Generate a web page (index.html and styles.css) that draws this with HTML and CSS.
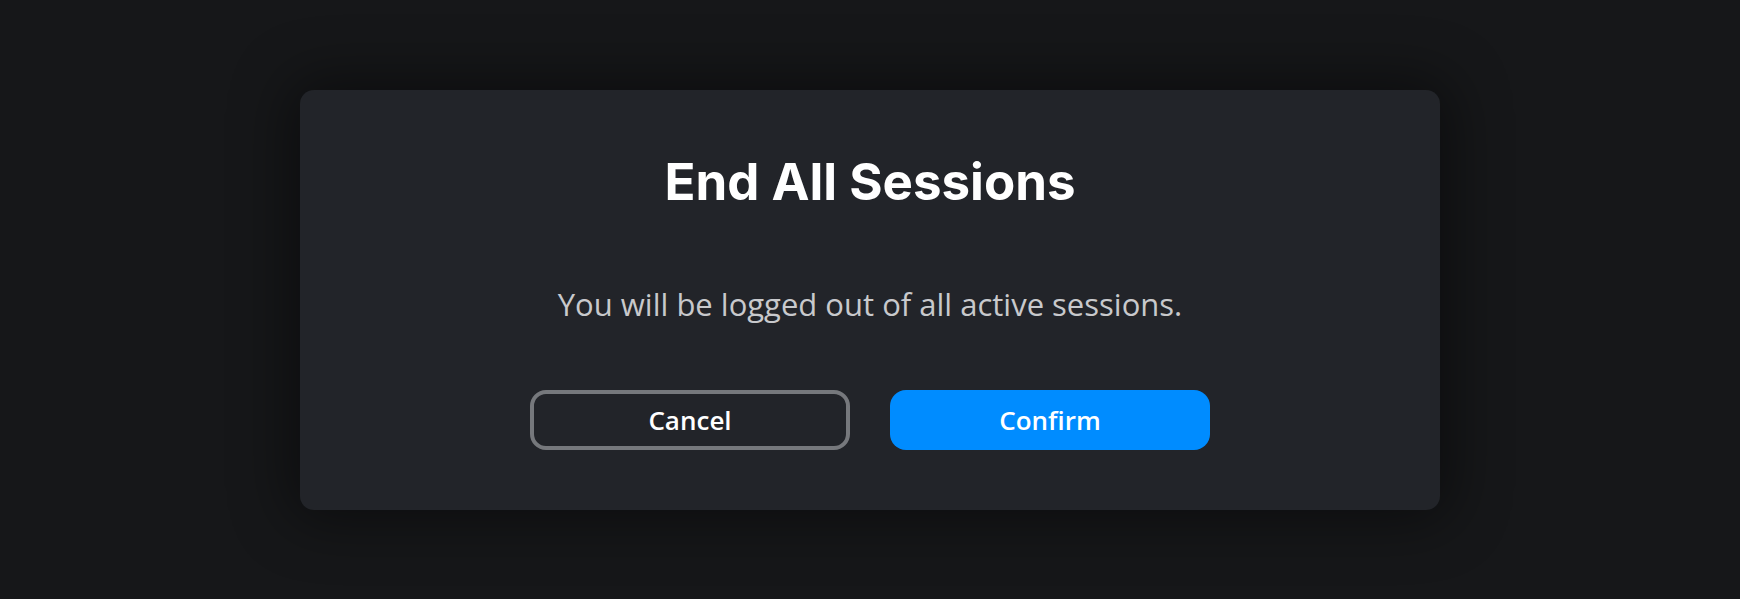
FILE: index.html
```html
<!DOCTYPE html>
<html lang="en">
<head>
<meta charset="utf-8">
<title>End All Sessions</title>
<link rel="stylesheet" href="styles.css">
</head>
<body>
<div class="backdrop">
  <div class="dialog" role="dialog" aria-labelledby="dlg-title">
    <h1 class="dialog-title" id="dlg-title">End All Sessions</h1>
    <p class="dialog-text">You will be logged out of all active sessions.</p>
    <div class="dialog-actions">
      <button class="btn btn-secondary" type="button">Cancel</button>
      <button class="btn btn-primary" type="button">Confirm</button>
    </div>
  </div>
</div>
</body>
</html>
```

FILE: styles.css
```css
html, body {
  margin: 0;
  padding: 0;
  height: 100%;
}

body {
  background: #161719;
  font-family: "Open Sans", "Noto Sans", sans-serif;
}

.backdrop {
  height: 100%;
  display: flex;
  align-items: center;
  justify-content: center;
}

.dialog {
  width: 1140px;
  height: 420px;
  box-sizing: border-box;
  padding: 60px 0 60px;
  background: #222429;
  border-radius: 14px;
  box-shadow: 0 0 60px 10px rgba(0, 0, 0, 0.45);
  display: flex;
  flex-direction: column;
  align-items: center;
}

.dialog-title {
  margin: 0;
  font-family: Inter, Lato, "Open Sans", sans-serif;
  font-weight: 700;
  font-size: 51px;
  line-height: 64px;
  color: #ffffff;
}

.dialog-text {
  margin: 68px 0 0;
  font-size: 31px;
  line-height: 44px;
  font-weight: 400;
  color: #c8c9cc;
}

.dialog-actions {
  margin-top: 64px;
  display: flex;
  gap: 40px;
}

.btn {
  width: 320px;
  height: 60px;
  box-sizing: border-box;
  border-radius: 16px;
  font-family: "Open Sans", sans-serif;
  font-weight: 600;
  font-size: 26px;
  line-height: 1;
  color: #ffffff;
  cursor: pointer;
  padding: 0;
}

.btn-secondary {
  background: transparent;
  border: 4px solid #76787c;
}

.btn-primary {
  background: #008cff;
  border: none;
}
```
